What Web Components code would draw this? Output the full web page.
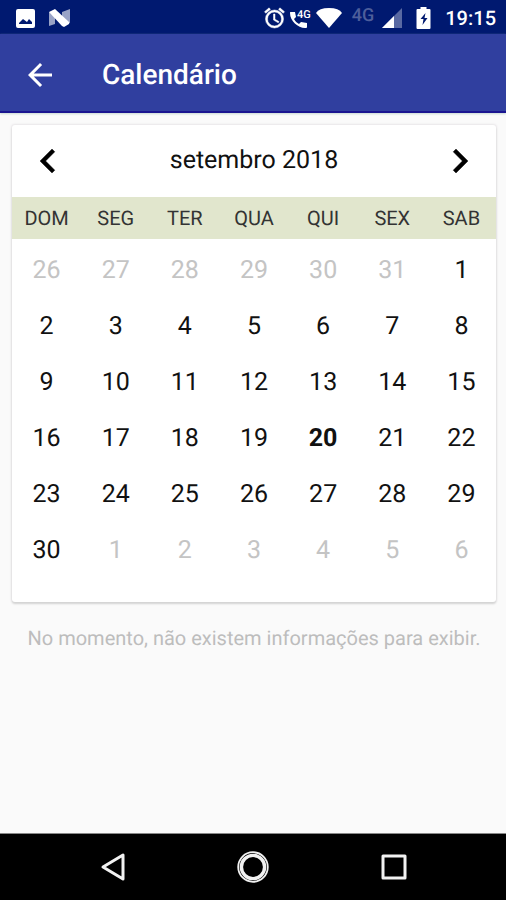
<!DOCTYPE html>
<html lang="pt-BR">
<head>
<meta charset="utf-8">
<meta name="viewport" content="width=device-width, initial-scale=1">
<title>Calendário</title>
<style>
    body {
        margin: 0;
        background: #fafafa;
        font-family: Roboto, "Noto Sans", sans-serif;
        text-rendering: geometricPrecision;
    }
</style>
</head>
<body>
<school-app>
    <status-bar slot="status">19:15</status-bar>
    <app-bar slot="header">Calendário</app-bar>
    <month-calendar year="2018" month="9" today="20"></month-calendar>
    <empty-message>No momento, não existem informações para exibir.</empty-message>
    <nav-bar slot="footer"></nav-bar>
</school-app>

<script>
function makeTemplate(html) {
    const template = document.createElement('template');
    template.innerHTML = html;
    return template;
}

// Every element clones its own template into an open shadow root
class BaseElement extends HTMLElement {
    constructor() {
        super();
        this.attachShadow({ mode: 'open' });
        this.shadowRoot.appendChild(this.constructor.template.content.cloneNode(true));
    }
}

// Page frame: bars above and below, content between
class SchoolApp extends BaseElement {
    static template = makeTemplate(`
<style>
    :host {
        display: flex;
        flex-direction: column;
        min-height: 100vh;
    }
    main {
        flex: 1;
        padding: 12px 10px 12px 12px;
    }
</style>
<slot name="status"></slot>
<slot name="header"></slot>
<main><slot></slot></main>
<slot name="footer"></slot>
`);
}

// System status bar, the clock is passed in
class StatusBar extends BaseElement {
    static template = makeTemplate(`
<style>
    :host {
        display: flex;
        align-items: center;
        justify-content: space-between;
        box-sizing: border-box;
        height: 34px;
        padding: 2px 10px 0 16px;
        background: #001970;
        color: #fff;
    }
    svg {
        display: block;
        fill: currentColor;
    }
    div {
        display: flex;
        align-items: center;
    }
    .notices {
        gap: 14px;
    }
    .system {
        gap: 14px;
    }
    .signals {
        gap: 10px;
    }
    .radio {
        gap: 4px;
    }
    .mobile {
        gap: 8px;
    }
    .network {
        align-self: flex-start;
        font-size: 18px;
        line-height: 16px;
        font-weight: 500;
        color: #4d5e9b;
    }
    .clock {
        font-size: 20px;
        line-height: 24px;
        font-weight: 500;
    }
</style>
<div class="notices">
    <svg width="19" height="19" viewBox="0 0 19 19" aria-hidden="true">
        <path fill-rule="evenodd" d="M2 0h15a2 2 0 0 1 2 2v15a2 2 0 0 1-2 2H2a2 2 0 0 1-2-2V2a2 2 0 0 1 2-2zM3 15h13v-2l-3-3-2 3-4-3-4 4z"/>
    </svg>
    <svg width="21" height="18" viewBox="0 0 21 18" aria-hidden="true">
        <path opacity=".6" d="M0 3l6 3v9l-6 2zM13 3l8-3v14l-4 2-4-4z"/>
        <path d="M0 3L6 0l14 13v2l-5 3-2-1z"/>
    </svg>
</div>
<div class="system">
    <div class="signals">
        <div class="radio">
            <svg width="23" height="22" viewBox="1 1 22 22" aria-hidden="true">
                <path d="M22 5.72l-4.6-3.86-1.29 1.53 4.6 3.86L22 5.72zM7.88 3.39L6.6 1.86 2 5.71l1.29 1.53 4.59-3.85zM12.5 8H11v6l4.75 2.85.75-1.23-4-2.37V8zM12 4a9 9 0 1 0 0 18 9 9 0 0 0 0-18zm0 16a7 7 0 1 1 0-14 7 7 0 0 1 0 14z" stroke="#fff" stroke-width=".5"/>
            </svg>
            <svg width="22" height="22" viewBox="0 0 22 22" aria-hidden="true">
                <path d="M1 5h4l1 5-2 2c1 2 3 4 5 5l2-2 6 1v4c0 1-1 1-2 1C8 21 0 14 0 6c0-1 0-1 1-1z"/>
                <text x="7" y="11" font-size="11" font-weight="500">4G</text>
            </svg>
            <svg width="26" height="20" viewBox="0 0 26 20" aria-hidden="true">
                <path d="M13 20L0 5Q3 0 13 0T26 5z"/>
            </svg>
        </div>
        <div class="mobile">
            <span class="network">4G</span>
            <svg width="20" height="20" viewBox="0 0 20 20" aria-hidden="true">
                <path opacity=".35" d="M20 0v20H0z"/>
                <path d="M12 8v12H0z"/>
            </svg>
        </div>
    </div>
    <svg width="15" height="22" viewBox="0 0 14 22" aria-hidden="true">
        <path fill-rule="evenodd" d="M4 0h6v2h3a1 1 0 0 1 1 1v18a1 1 0 0 1-1 1H1a1 1 0 0 1-1-1V3a1 1 0 0 1 1-1h3zM9 6l-5 6h3l-1 6 5-7H8z"/>
    </svg>
    <span class="clock"><slot></slot></span>
</div>
`);
}

class AppBar extends BaseElement {
    static template = makeTemplate(`
<style>
    :host {
        display: flex;
        align-items: center;
        gap: 44px;
        box-sizing: border-box;
        height: 79px;
        padding: 2px 22px 0;
        background: #303f9f;
        color: #fff;
        box-shadow: inset 0 -2px #1a1590, 0 1px 2px #c8d8d0;
    }
    button {
        padding: 0;
        border: 0;
        background: none;
        color: inherit;
    }
    svg {
        display: block;
        fill: currentColor;
    }
    h1 {
        margin: 0;
        font-size: 28px;
        line-height: 32px;
        font-weight: 500;
    }
</style>
<button type="button" aria-label="Voltar">
    <svg width="36" height="36" viewBox="0 0 24 24">
        <path d="M20 11H7.83l5.59-5.59L12 4l-8 8 8 8 1.41-1.41L7.83 13H20v-2z"/>
    </svg>
</button>
<h1><slot></slot></h1>
`);
}

// Month grid, filled from the year, month and today attributes
class MonthCalendar extends BaseElement {
    static template = makeTemplate(`
<style>
    :host {
        display: block;
        padding-bottom: 24px;
        border-radius: 3px;
        background: #fff;
        box-shadow: 0 2px 2px #d4d4d4, 0 0 2px 1px #e8e6e8;
        color: #111;
    }
    header {
        display: flex;
        align-items: center;
        justify-content: space-between;
        height: 72px;
        padding: 0 12px;
    }
    button {
        padding: 0;
        border: 0;
        background: none;
        color: #000;
    }
    svg {
        display: block;
        fill: currentColor;
        stroke: currentColor;
        stroke-width: .2;
    }
    h2 {
        margin: 0;
        font-size: 25px;
        line-height: 32px;
        font-weight: 400;
    }
    table {
        width: 100%;
        table-layout: fixed;
        border-collapse: collapse;
        text-align: center;
    }
    th, td {
        padding: 0;
        font-weight: 400;
    }
    th {
        height: 42px;
        background: #e1e6cd;
        font-size: 20px;
        color: #333;
    }
    td {
        height: 56px;
        font-size: 25px;
    }
    tbody::before {
        content: "";
        display: block;
        height: 3px;
    }
    .other {
        color: #c4c4c4;
    }
    .today {
        font-weight: 700;
    }
</style>
<header>
    <button type="button" aria-label="Mês anterior">
        <svg width="48" height="48" viewBox="0 0 24 24"><path d="M15.41 7.41L14 6l-6 6 6 6 1.41-1.41L10.83 12z"/></svg>
    </button>
    <h2></h2>
    <button type="button" aria-label="Próximo mês">
        <svg width="48" height="48" viewBox="0 0 24 24"><path d="M10 6L8.59 7.41 13.17 12l-4.58 4.59L10 18l6-6z"/></svg>
    </button>
</header>
<table>
    <thead>
        <tr><th>DOM</th><th>SEG</th><th>TER</th><th>QUA</th><th>QUI</th><th>SEX</th><th>SAB</th></tr>
    </thead>
    <tbody></tbody>
</table>
`);

    connectedCallback() {
        this.year = Number(this.getAttribute('year'));
        this.month = Number(this.getAttribute('month')) - 1;
        const [prev, next] = this.shadowRoot.querySelectorAll('button');
        prev.addEventListener('click', () => this.move(-1));
        next.addEventListener('click', () => this.move(1));
        this.render();
    }

    move(step) {
        const date = new Date(this.year, this.month + step, 1);
        this.year = date.getFullYear();
        this.month = date.getMonth();
        this.removeAttribute('today');
        this.render();
    }

    render() {
        const months = ['janeiro', 'fevereiro', 'março', 'abril', 'maio', 'junho',
            'julho', 'agosto', 'setembro', 'outubro', 'novembro', 'dezembro'];
        const today = Number(this.getAttribute('today'));
        const offset = new Date(this.year, this.month, 1).getDay();
        const body = this.shadowRoot.querySelector('tbody');

        this.shadowRoot.querySelector('h2').textContent = `${months[this.month]} ${this.year}`;
        body.textContent = '';
        // always six weeks, padded with the days of the months around
        for (let week = 0; week < 6; week++) {
            const row = body.insertRow();
            for (let day = 0; day < 7; day++) {
                const date = new Date(this.year, this.month, week * 7 + day - offset + 1);
                const cell = row.insertCell();
                cell.textContent = date.getDate();
                if (date.getMonth() !== this.month) {
                    cell.className = 'other';
                } else if (date.getDate() === today) {
                    cell.className = 'today';
                }
            }
        }
    }
}

class EmptyMessage extends BaseElement {
    static template = makeTemplate(`
<style>
    :host {
        display: block;
        padding-top: 24px;
        font-size: 20px;
        line-height: 24px;
        text-align: center;
        color: #bdbdbd;
    }
</style>
<slot></slot>
`);
}

// System navigation buttons
class NavBar extends BaseElement {
    static template = makeTemplate(`
<style>
    :host {
        display: flex;
        align-items: center;
        justify-content: center;
        gap: 104px;
        box-sizing: border-box;
        height: 67px;
        border-top: 1px solid #888;
        background: #000;
        color: #f2f2f2;
    }
    button {
        padding: 0;
        border: 0;
        background: none;
        color: inherit;
    }
    svg {
        display: block;
        fill: none;
        stroke: currentColor;
        stroke-width: 3;
        stroke-linejoin: round;
    }
</style>
<button type="button" aria-label="Voltar">
    <svg width="36" height="36" viewBox="0 0 36 36"><path d="M28 6v24L8 18z"/></svg>
</button>
<button type="button" aria-label="Início">
    <svg width="36" height="36" viewBox="0 0 36 36">
        <circle cx="18" cy="18" r="14.8" stroke-width="1.8"/>
        <circle cx="18" cy="18" r="11.6" stroke-width="3.4"/>
    </svg>
</button>
<button type="button" aria-label="Recentes">
    <svg width="36" height="36" viewBox="0 0 36 36"><path d="M8 7h22v22H8z"/></svg>
</button>
`);
}

customElements.define('school-app', SchoolApp);
customElements.define('status-bar', StatusBar);
customElements.define('app-bar', AppBar);
customElements.define('month-calendar', MonthCalendar);
customElements.define('empty-message', EmptyMessage);
customElements.define('nav-bar', NavBar);
</script>
</body>
</html>
